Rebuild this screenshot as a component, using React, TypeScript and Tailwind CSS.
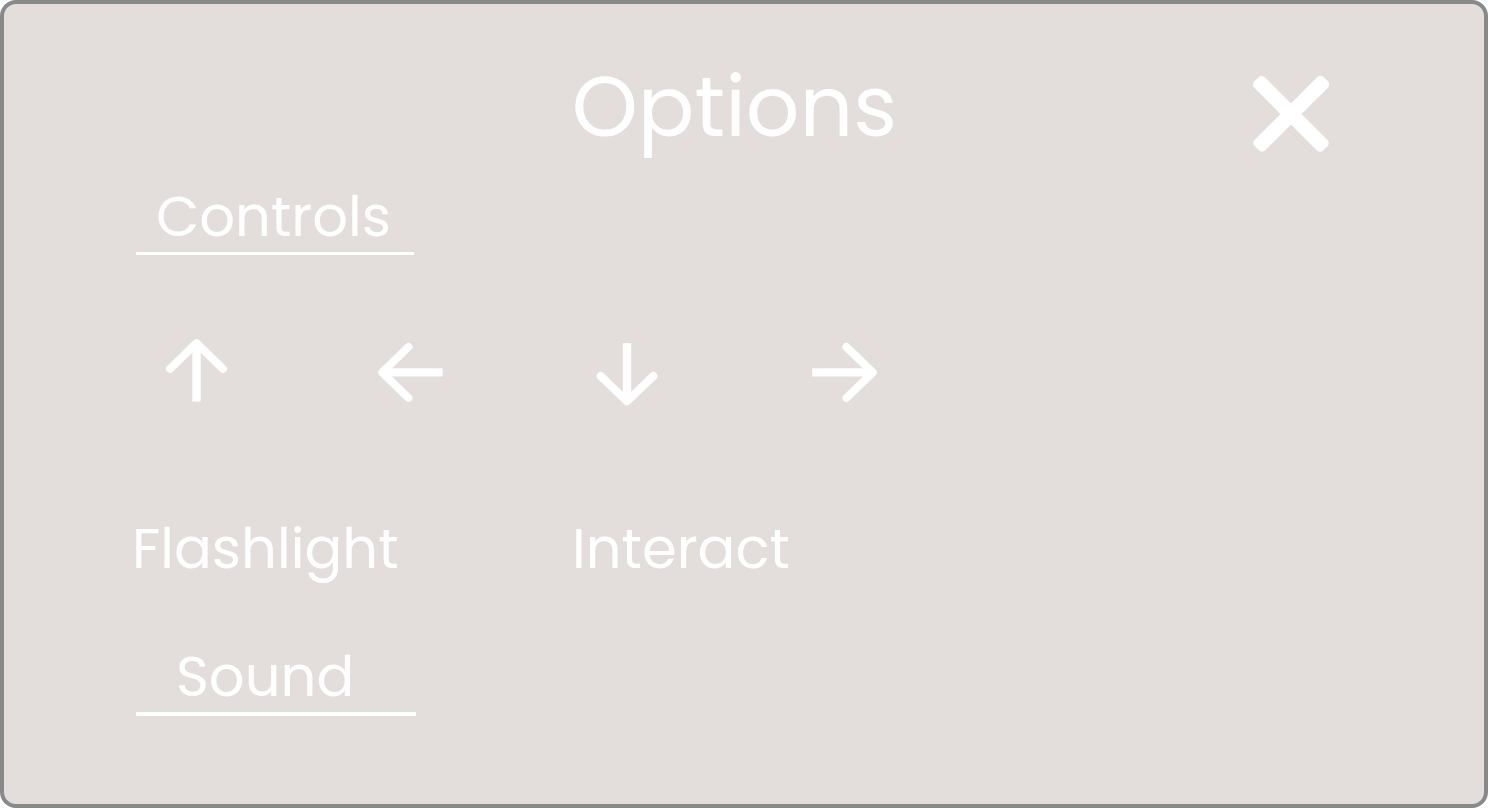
import type { ReactNode } from "react";

type Direction = "Up" | "Left" | "Down" | "Right";

const arrows: { name: Direction; head: string; shaft: string }[] = [
  { name: "Up", head: "M14 36.8 40.5 11.2 67 36.8", shaft: "M40.5 12V69.6" },
  { name: "Left", head: "M36.4 15 10.2 40.4 36.4 66", shaft: "M11 40.4H70.6" },
  { name: "Down", head: "M12.6 44 39 69.4 65.4 44", shaft: "M39 11.2V68.6" },
  { name: "Right", head: "M42.4 15 68.8 40.4 42.4 66", shaft: "M8.2 40.4H68" },
];

function ArrowIcon({ head, shaft }: { head: string; shaft: string }) {
  return (
    <svg viewBox="0 0 80 80" className="block size-20" fill="none" stroke="currentColor" aria-hidden="true">
      <path d={head} strokeWidth="8" strokeLinecap="round" strokeLinejoin="round" />
      <path d={shaft} strokeWidth="8.4" />
    </svg>
  );
}

function CloseIcon() {
  return (
    <svg viewBox="0 0 76 76" className="block size-[76px] overflow-visible" fill="currentColor" aria-hidden="true">
      <rect x="-11" y="30.5" width="97.6" height="15" rx="4.5" transform="rotate(45 38 38)" />
      <rect x="-10.4" y="30.5" width="97.6" height="15" rx="4.5" transform="rotate(-45 38 38)" />
    </svg>
  );
}

function Action({ children }: { children: ReactNode }) {
  return (
    <li>
      <button type="button" className="block cursor-pointer">
        {children}
      </button>
    </li>
  );
}

export default function App() {
  return (
    <main className="min-h-screen rounded-2xl border-4 border-[#898989] bg-[#e3dedb] pt-[58px] pr-[155px] pb-16 pl-32 font-['Poppins','Inter',sans-serif] text-[56px] leading-[64px] text-white">
      <header className="ml-2 grid grid-cols-[1fr_auto_1fr] items-end">
        <h1 className="col-start-2 text-[84px] leading-[90px]">Options</h1>
        <button type="button" aria-label="Close" className="cursor-pointer justify-self-end">
          <CloseIcon />
        </button>
      </header>

      <section aria-labelledby="controls" className="mt-[33px]">
        <h2 id="controls" className="ml-1 w-[278px] border-b-3 border-white pb-[3px] pl-5">
          Controls
        </h2>
        <ul className="mt-[77px] ml-6 flex gap-[136px]">
          {arrows.map((arrow) => (
            <li key={arrow.name}>
              <button type="button" aria-label={arrow.name} className="block cursor-pointer">
                <ArrowIcon head={arrow.head} shaft={arrow.shaft} />
              </button>
            </li>
          ))}
        </ul>
        <ul className="mt-[105px] grid grid-cols-[440px_1fr]">
          <Action>Flashlight</Action>
          <Action>Interact</Action>
        </ul>
      </section>

      <section aria-labelledby="sound" className="mt-16">
        <h2 id="sound" className="ml-1 w-[280px] border-b-4 border-white pb-[3px] pl-10">
          Sound
        </h2>
      </section>
    </main>
  );
}
